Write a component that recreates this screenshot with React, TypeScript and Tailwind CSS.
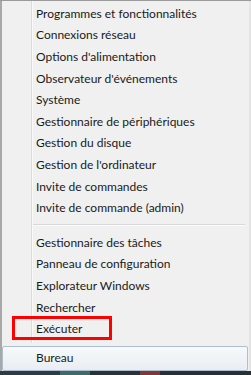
import React from "react";

const group1 = [
  "Programmes et fonctionnalités",
  "Connexions réseau",
  "Options d'alimentation",
  "Observateur d'événements",
  "Système",
  "Gestionnaire de périphériques",
  "Gestion du disque",
  "Gestion de l'ordinateur",
  "Invite de commandes",
  "Invite de commande (admin)",
];

const group2 = [
  "Gestionnaire des tâches",
  "Panneau de configuration",
  "Explorateur Windows",
  "Rechercher",
];

function Item({ label }: { label: string }) {
  return (
    <div className="h-[21.6px] flex items-center pl-[34px] text-[12px] text-[#1a1a1a] leading-none whitespace-nowrap">
      {label}
    </div>
  );
}

export default function App() {
  return (
    <div
      className="w-[251px] h-[375px] bg-[#f0f0f0] flex flex-col overflow-hidden"
      style={{ fontFamily: 'Lato, "Noto Sans", sans-serif' }}
    >
      <div className="h-[1px] bg-[#9a9a9a] shrink-0" />
      <div className="flex-1 flex flex-row min-h-0">
        <div className="w-[2px] bg-[#a8a8a8] shrink-0" />
        <div className="relative flex-1 flex flex-col pt-[2px]">
          <div className="absolute left-[29px] top-0 bottom-[28px] w-[1px] bg-[#dcdcdc]" />
          <div className="absolute left-[30px] top-0 bottom-[28px] w-[1px] bg-[#fafafa]" />
          {group1.map((l) => (
            <Item key={l} label={l} />
          ))}
          <div className="h-[13px] flex flex-col justify-center pl-[31px] pr-[4px]">
            <div className="h-[1px] bg-[#d8d8d8]" />
            <div className="h-[1px] bg-[#fbfbfb]" />
          </div>
          {group2.map((l) => (
            <Item key={l} label={l} />
          ))}
          <div className="relative">
            <Item label="Exécuter" />
            <div className="absolute left-[10px] top-[-2px] w-[100px] h-[24px] border-[3px] border-[#ff0000]" />
          </div>
          <div className="h-[6px]" />
          <div className="h-[25px] mr-[1px] rounded-[2px] border border-[#aebdcf] bg-gradient-to-b from-[#f7f9fb] to-[#e9edf2] flex items-center pl-[33px] text-[12px] text-[#1a1a1a]">
            Bureau
          </div>
        </div>
        <div className="w-[2px] bg-[#e4e4e4] shrink-0" />
      </div>
      <div className="h-[4px] shrink-0 flex">
        <div className="w-[60px] bg-[#2c3b44]" />
        <div className="w-[30px] bg-[#3f6a6a]" />
        <div className="w-[50px] bg-[#2a3238]" />
        <div className="w-[20px] bg-[#7a3a3a]" />
        <div className="flex-1 bg-[#263036]" />
      </div>
    </div>
  );
}
